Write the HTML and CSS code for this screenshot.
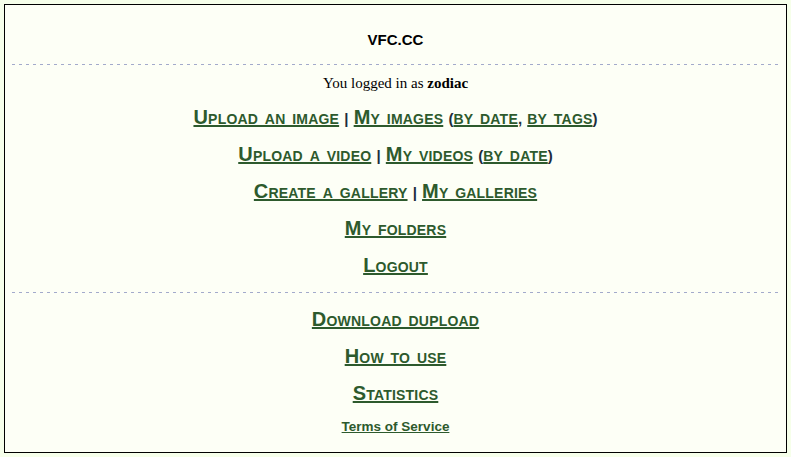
FILE: index.html
```html
<!DOCTYPE html>
<html>
<head>
<meta charset="utf-8">
<link rel="stylesheet" href="styles.css">
</head>
<body>
<div class="box">
  <div class="brand">VFC.CC</div>
  <div class="rule"></div>
  <div class="login">You logged in as <b>zodiac</b></div>
  <div class="menu">
    <div class="row"><a href="#">Upload an image</a> | <a href="#">My images</a> (<a href="#">by date</a>, <a href="#">by tags</a>)</div>
    <div class="row"><a href="#">Upload a video</a> | <a href="#">My videos</a> (<a href="#">by date</a>)</div>
    <div class="row"><a href="#">Create a gallery</a> | <a href="#">My galleries</a></div>
    <div class="row"><a href="#">My folders</a></div>
    <div class="row"><a href="#">Logout</a></div>
  </div>
  <div class="rule"></div>
  <div class="menu menu2">
    <div class="row"><a href="#">Download dupload</a></div>
    <div class="row"><a href="#">How to use</a></div>
    <div class="row"><a href="#">Statistics</a></div>
  </div>
  <div class="tos"><a href="#">Terms of Service</a></div>
</div>
</body>
</html>
```
FILE: styles.css
```css
html, body {
  background: #f6ffea;
}
body {
  margin: 4px;
}
.box {
  border: 1px solid #000;
  background: #fdfff6;
  padding: 0 7px 15px;
  text-align: center;
}
.brand {
  font: bold 15px/20px "Liberation Sans", Arial, sans-serif;
  color: #000;
  padding: 25px 0 14px;
}
.rule {
  height: 1px;
  background: repeating-linear-gradient(90deg, #a3aacb 0 3px, transparent 3px 7px);
}
.login {
  font: 15px/20px "Liberation Serif", "Times New Roman", serif;
  color: #000;
  padding-top: 8px;
}
.menu {
  padding-top: 7px;
  padding-bottom: 7px;
}
.menu2 {
  padding-top: 9px;
  padding-bottom: 4px;
}
.row {
  height: 37px;
  font: bold 15px/37px "Liberation Sans", Arial, sans-serif;
  color: #1c2c3c;
  word-spacing: 1px;
}
.row a {
  font-size: 20px;
  line-height: 20px;
  font-variant: small-caps;
  color: #2d5a2d;
  text-decoration: underline;
  word-spacing: 1px;
  letter-spacing: 0.2px;
}
.tos {
  font: bold 13.5px/20px "Liberation Sans", Arial, sans-serif;
}
.tos a {
  color: #2d5a2d;
  text-decoration: underline;
}
```
